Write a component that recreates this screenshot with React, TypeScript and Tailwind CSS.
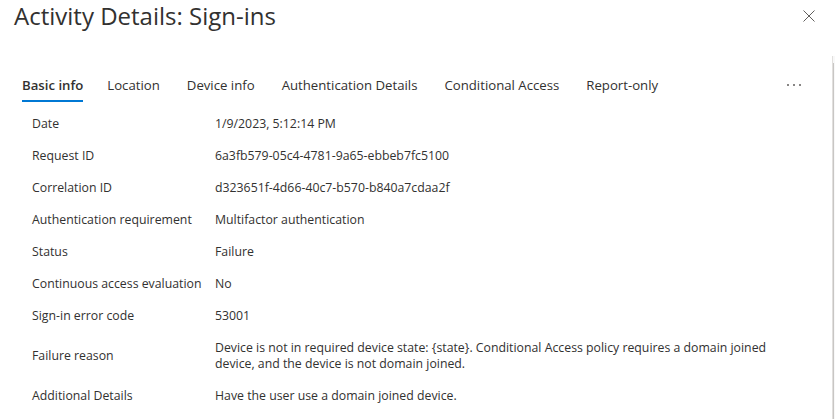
import React from 'react';

interface DetailRow {
  label: string;
  value: React.ReactNode;
}

const tabs = ['Basic info', 'Location', 'Device info', 'Authentication Details', 'Conditional Access', 'Report-only'];

const rows: DetailRow[] = [
  { label: 'Date', value: '1/9/2023, 5:12:14 PM' },
  { label: 'Request ID', value: '6a3fb579-05c4-4781-9a65-ebbeb7fc5100' },
  { label: 'Correlation ID', value: 'd323651f-4d66-40c7-b570-b840a7cdaa2f' },
  { label: 'Authentication requirement', value: 'Multifactor authentication' },
  { label: 'Status', value: 'Failure' },
  { label: 'Continuous access evaluation', value: 'No' },
  { label: 'Sign-in error code', value: '53001' },
  {
    label: 'Failure reason',
    value: (
      <>
        Device is not in required device state: {'{state}'}. Conditional Access policy requires a domain joined
        <br />
        device, and the device is not domain joined.
      </>
    ),
  },
  { label: 'Additional Details', value: 'Have the user use a domain joined device.' },
];

const App: React.FC = () => {
  return (
    <div
      className="w-[835px] h-[419px] overflow-hidden bg-white text-[#323130]"
      style={{ fontFamily: '"Open Sans", "Noto Sans", sans-serif' }}
    >
      {/* Header */}
      <div className="flex items-center justify-between h-[32px] pl-[14px] pr-[16px]">
        <h1 className="text-[24px] leading-[32px] font-normal">Activity Details: Sign-ins</h1>
        <button className="w-[20px] h-[20px] flex items-center justify-center text-[#605e5c]">
          <svg width="12" height="12" viewBox="0 0 12 12" fill="none" stroke="currentColor" strokeWidth="1">
            <path d="M0.5 0.5 L11.5 11.5 M11.5 0.5 L0.5 11.5" />
          </svg>
        </button>
      </div>

      <div className="flex h-[387px] mt-[24px]">
        <div className="flex-1 pt-[12px]">
          {/* Tabs */}
          <div className="flex items-center pl-[22px] pr-[22px] h-[34px]">
            <div className="flex items-center gap-[27px] flex-1">
              {tabs.map((tab, i) => (
                <div key={tab} className={`relative h-[34px] flex items-center ${i === 0 ? 'mr-[-3px]' : ''}`}>
                  <span className={`text-[13.2px] leading-[20px] ${i === 0 ? 'font-semibold' : ''}`}>{tab}</span>
                  {i === 0 && <span className="absolute left-0 right-0 bottom-0 h-[2px] bg-[#0078d4]" />}
                </div>
              ))}
            </div>
            <button className="w-[32px] h-[32px] flex items-center justify-center text-[#605e5c]">
              <svg width="16" height="4" viewBox="0 0 16 4" fill="currentColor">
                <circle cx="2" cy="2" r="1" />
                <circle cx="8" cy="2" r="1" />
                <circle cx="14" cy="2" r="1" />
              </svg>
            </button>
          </div>

          {/* Detail table */}
          <div className="mt-[6px] pl-[32px] text-[12.3px] leading-[16px]">
            {rows.map((row) => (
              <div key={row.label} className="grid grid-cols-[183px_1fr] items-center py-[8px]">
                <div>{row.label}</div>
                <div>{row.value}</div>
              </div>
            ))}
          </div>
        </div>

        {/* Scrollbar edge */}
        <div className="w-[3px] border-l border-[#e1dfdd] bg-[#f8f8f8] flex flex-col">
          <div className="h-[7px]" />
          <div className="flex-1 w-[1px] bg-[#c8c6c4]" />
        </div>
      </div>
    </div>
  );
};

export default App;
